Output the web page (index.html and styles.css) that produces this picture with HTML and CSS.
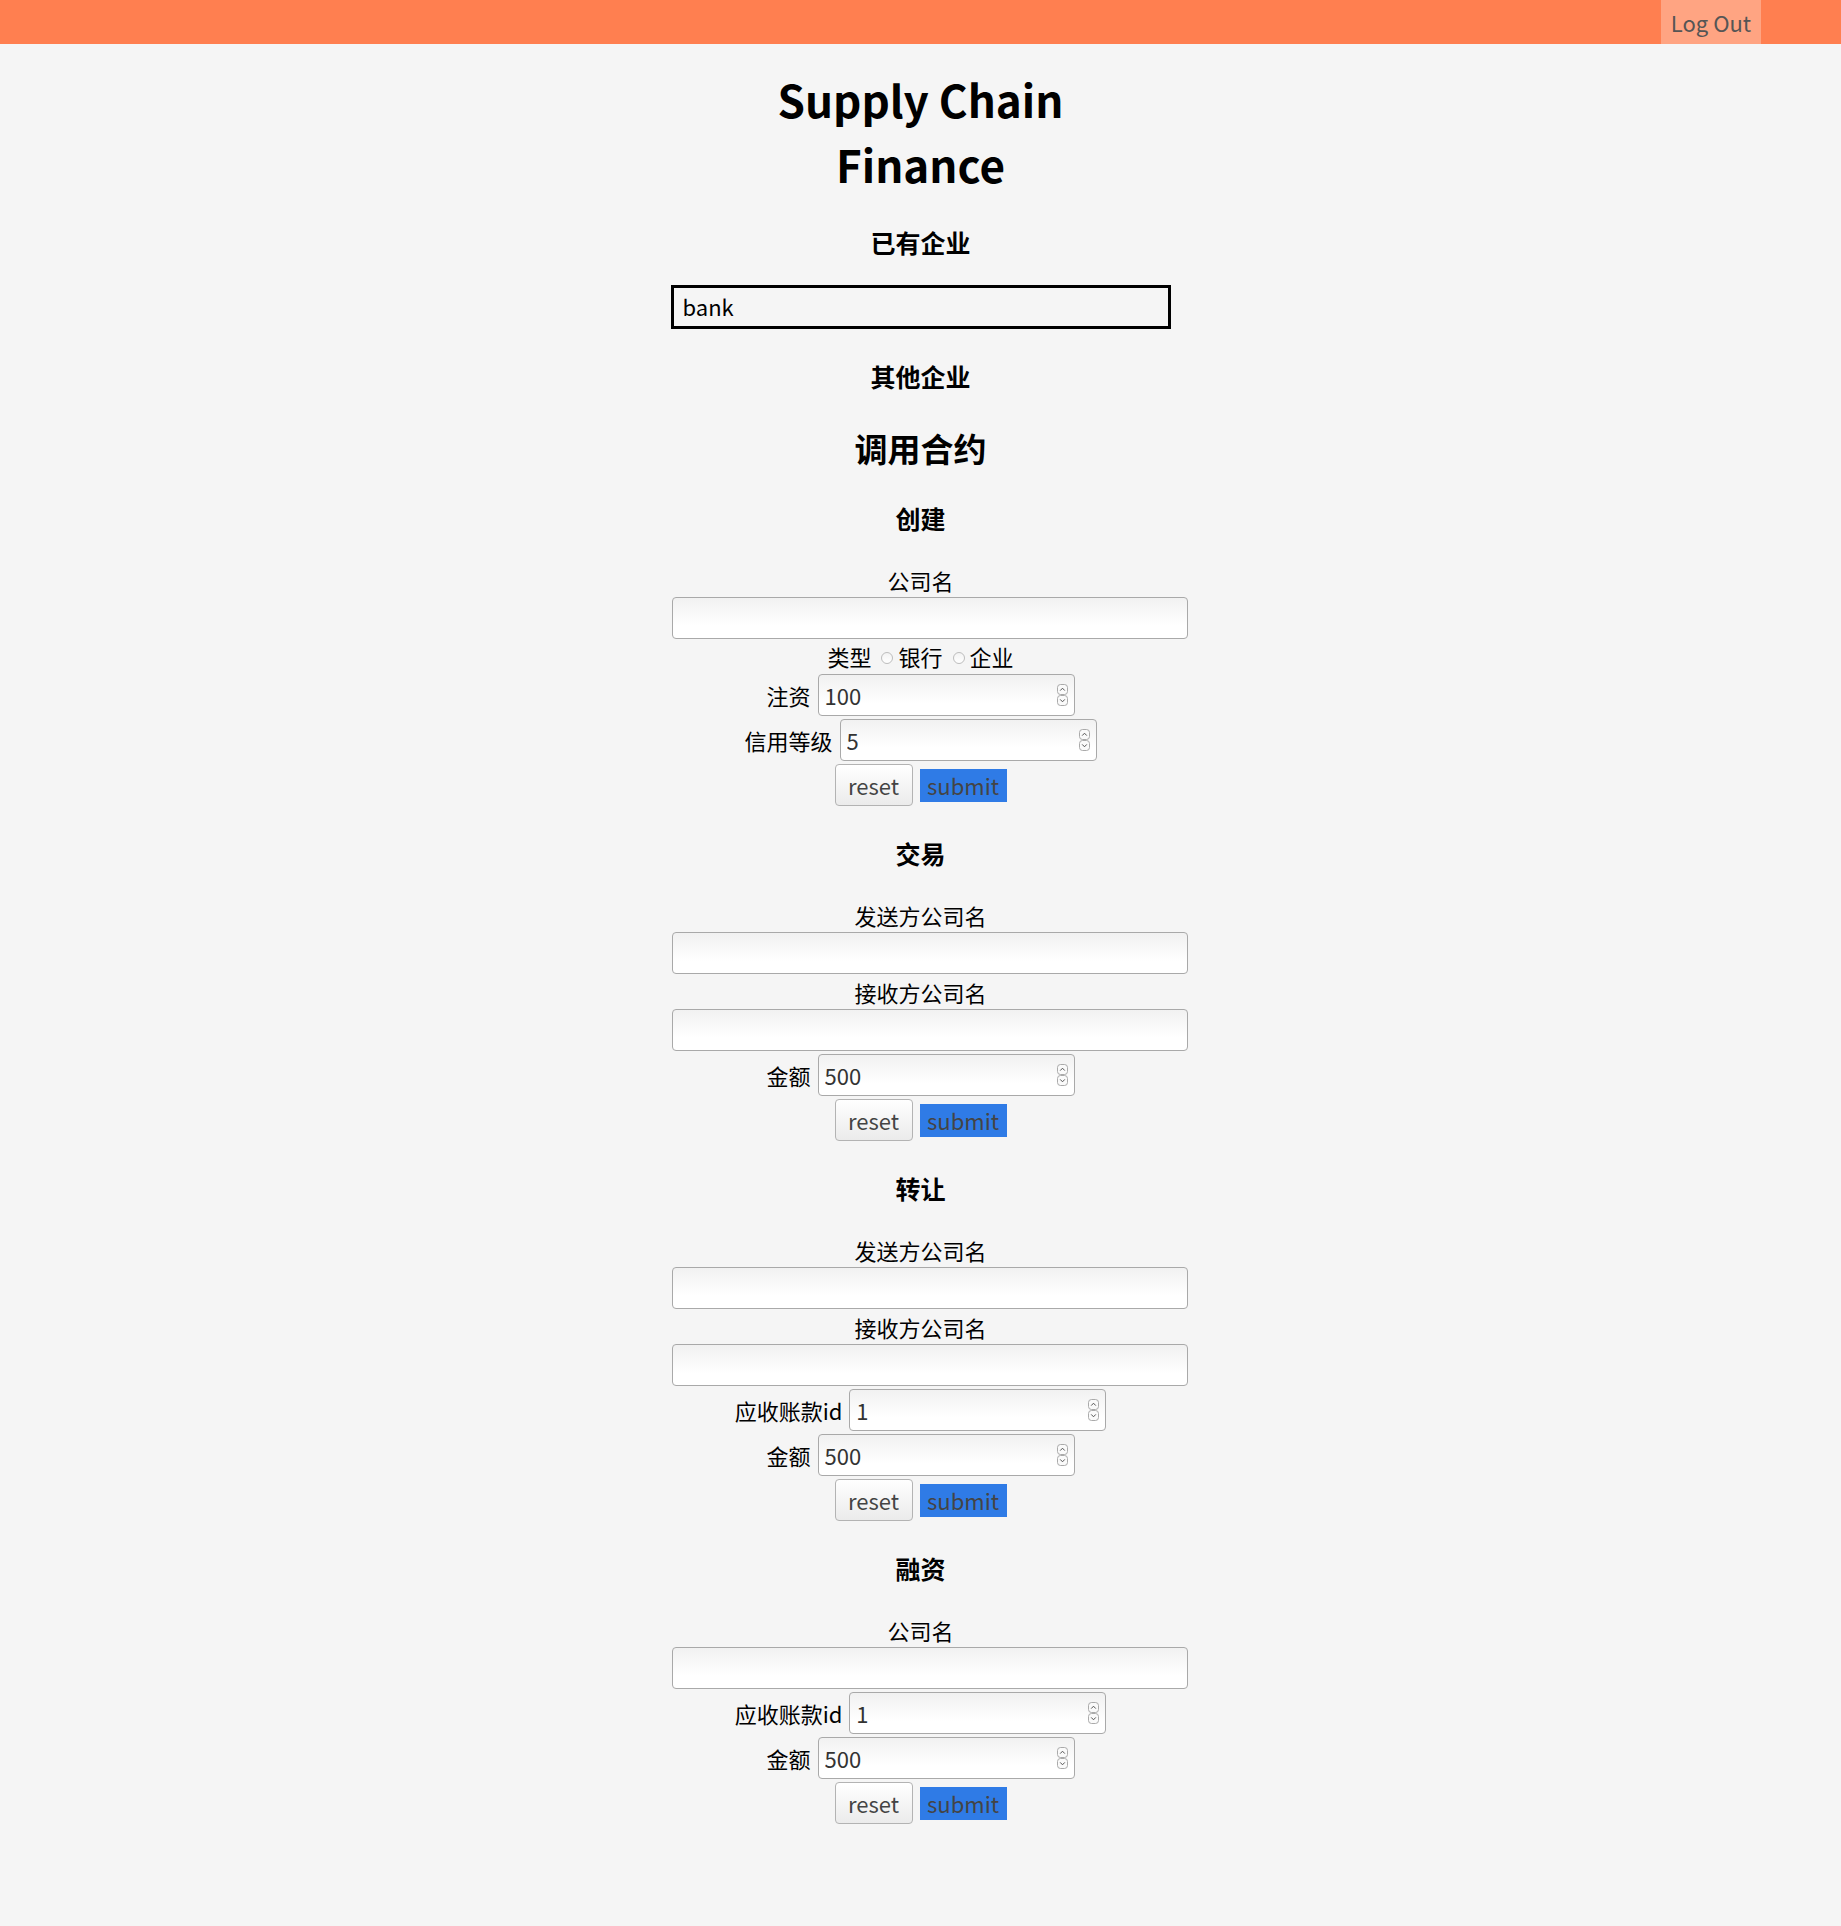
FILE: index.html
```html
<!DOCTYPE html>
<html lang="zh-CN">
<head>
<meta charset="utf-8">
<title>Supply Chain Finance</title>
<link rel="stylesheet" href="styles.css">
</head>
<body>
<header class="topbar">
  <button class="logout" type="button">Log Out</button>
</header>
<main class="page">
  <h1 class="title">Supply Chain Finance</h1>
  <h3 class="sub sub-existing">已有企业</h3>
  <div class="company-box">bank</div>
  <h3 class="sub sub-other">其他企业</h3>
  <h2 class="section-title">调用合约</h2>

  <div class="ops">
    <section class="op">
      <h3 class="sub">创建</h3>
      <form class="op-form">
        <div class="field-stack">
          <label class="stack-label">公司名</label>
          <input class="text-input" type="text">
        </div>
        <div class="radio-row">
          <span class="radio-title">类型</span>
          <label class="radio-opt"><input class="radio" type="radio" name="kind">银行</label>
          <label class="radio-opt"><input class="radio" type="radio" name="kind">企业</label>
        </div>
        <div class="num-row">
          <label class="row-label">注资</label>
          <div class="num">
            <input class="num-input" type="text" value="100">
            <svg class="spin" width="11" height="22" viewBox="0 0 11 22"><rect x="0.5" y="0.5" width="10" height="10" rx="3"/><rect x="0.5" y="11.5" width="10" height="10" rx="3"/><path class="chev" d="M3.2 6.6 L5.5 4.2 L7.8 6.6"/><path class="chev" d="M3.2 15.4 L5.5 17.8 L7.8 15.4"/></svg>
          </div>
        </div>
        <div class="num-row">
          <label class="row-label">信用等级</label>
          <div class="num">
            <input class="num-input" type="text" value="5">
            <svg class="spin" width="11" height="22" viewBox="0 0 11 22"><rect x="0.5" y="0.5" width="10" height="10" rx="3"/><rect x="0.5" y="11.5" width="10" height="10" rx="3"/><path class="chev" d="M3.2 6.6 L5.5 4.2 L7.8 6.6"/><path class="chev" d="M3.2 15.4 L5.5 17.8 L7.8 15.4"/></svg>
          </div>
        </div>
        <div class="btn-row">
          <button class="btn-reset" type="reset">reset</button>
          <button class="btn-submit" type="button">submit</button>
        </div>
      </form>
    </section>

    <section class="op">
      <h3 class="sub">交易</h3>
      <form class="op-form">
        <div class="field-stack">
          <label class="stack-label">发送方公司名</label>
          <input class="text-input" type="text">
        </div>
        <div class="field-stack">
          <label class="stack-label">接收方公司名</label>
          <input class="text-input" type="text">
        </div>
        <div class="num-row">
          <label class="row-label">金额</label>
          <div class="num">
            <input class="num-input" type="text" value="500">
            <svg class="spin" width="11" height="22" viewBox="0 0 11 22"><rect x="0.5" y="0.5" width="10" height="10" rx="3"/><rect x="0.5" y="11.5" width="10" height="10" rx="3"/><path class="chev" d="M3.2 6.6 L5.5 4.2 L7.8 6.6"/><path class="chev" d="M3.2 15.4 L5.5 17.8 L7.8 15.4"/></svg>
          </div>
        </div>
        <div class="btn-row">
          <button class="btn-reset" type="reset">reset</button>
          <button class="btn-submit" type="button">submit</button>
        </div>
      </form>
    </section>

    <section class="op">
      <h3 class="sub">转让</h3>
      <form class="op-form">
        <div class="field-stack">
          <label class="stack-label">发送方公司名</label>
          <input class="text-input" type="text">
        </div>
        <div class="field-stack">
          <label class="stack-label">接收方公司名</label>
          <input class="text-input" type="text">
        </div>
        <div class="num-row">
          <label class="row-label">应收账款id</label>
          <div class="num">
            <input class="num-input" type="text" value="1">
            <svg class="spin" width="11" height="22" viewBox="0 0 11 22"><rect x="0.5" y="0.5" width="10" height="10" rx="3"/><rect x="0.5" y="11.5" width="10" height="10" rx="3"/><path class="chev" d="M3.2 6.6 L5.5 4.2 L7.8 6.6"/><path class="chev" d="M3.2 15.4 L5.5 17.8 L7.8 15.4"/></svg>
          </div>
        </div>
        <div class="num-row">
          <label class="row-label">金额</label>
          <div class="num">
            <input class="num-input" type="text" value="500">
            <svg class="spin" width="11" height="22" viewBox="0 0 11 22"><rect x="0.5" y="0.5" width="10" height="10" rx="3"/><rect x="0.5" y="11.5" width="10" height="10" rx="3"/><path class="chev" d="M3.2 6.6 L5.5 4.2 L7.8 6.6"/><path class="chev" d="M3.2 15.4 L5.5 17.8 L7.8 15.4"/></svg>
          </div>
        </div>
        <div class="btn-row">
          <button class="btn-reset" type="reset">reset</button>
          <button class="btn-submit" type="button">submit</button>
        </div>
      </form>
    </section>

    <section class="op">
      <h3 class="sub">融资</h3>
      <form class="op-form">
        <div class="field-stack">
          <label class="stack-label">公司名</label>
          <input class="text-input" type="text">
        </div>
        <div class="num-row">
          <label class="row-label">应收账款id</label>
          <div class="num">
            <input class="num-input" type="text" value="1">
            <svg class="spin" width="11" height="22" viewBox="0 0 11 22"><rect x="0.5" y="0.5" width="10" height="10" rx="3"/><rect x="0.5" y="11.5" width="10" height="10" rx="3"/><path class="chev" d="M3.2 6.6 L5.5 4.2 L7.8 6.6"/><path class="chev" d="M3.2 15.4 L5.5 17.8 L7.8 15.4"/></svg>
          </div>
        </div>
        <div class="num-row">
          <label class="row-label">金额</label>
          <div class="num">
            <input class="num-input" type="text" value="500">
            <svg class="spin" width="11" height="22" viewBox="0 0 11 22"><rect x="0.5" y="0.5" width="10" height="10" rx="3"/><rect x="0.5" y="11.5" width="10" height="10" rx="3"/><path class="chev" d="M3.2 6.6 L5.5 4.2 L7.8 6.6"/><path class="chev" d="M3.2 15.4 L5.5 17.8 L7.8 15.4"/></svg>
          </div>
        </div>
        <div class="btn-row">
          <button class="btn-reset" type="reset">reset</button>
          <button class="btn-submit" type="button">submit</button>
        </div>
      </form>
    </section>
  </div>
</main>
</body>
</html>
```

FILE: styles.css
```css
* { box-sizing: border-box; }

html, body {
  margin: 0;
  padding: 0;
  background: #f5f5f5;
}

body {
  font-family: "Noto Sans CJK SC", "Noto Sans", sans-serif;
  font-size: 22px;
  color: #000;
  min-height: 1926px;
}

.topbar {
  height: 44px;
  background: #ff7f50;
  display: flex;
  justify-content: flex-end;
  padding-right: 80px;
}

.logout {
  width: 100px;
  height: 44px;
  border: none;
  margin: 0;
  padding: 0;
  background: #ffa482;
  color: #555;
  font-family: inherit;
  font-size: 22px;
  line-height: 44px;
}

.page {
  width: 500px;
  margin: 0 auto;
  text-align: center;
  display: flex;
  flex-direction: column;
  align-items: stretch;
}

.title {
  max-width: 360px;
  margin: 23px auto 0;
  font-size: 44px;
  line-height: 65px;
  font-weight: 700;
}

.sub {
  margin: 0;
  font-size: 25px;
  line-height: 32px;
  font-weight: 700;
}

.sub-existing { margin-top: 29px; }
.sub-other { margin-top: 31px; }

.company-box {
  margin-top: 27px;
  height: 44px;
  border: 3px solid #000;
  text-align: left;
  padding-left: 9px;
  font-size: 22px;
  line-height: 37px;
}

.section-title {
  margin: 36px 0 0;
  font-size: 33px;
  line-height: 40px;
  font-weight: 700;
}

.ops {
  display: flex;
  flex-direction: column;
  gap: 31px;
  padding-top: 34px;
}

.op-form {
  margin: 31px 0 0;
  display: flex;
  flex-direction: column;
  align-items: center;
  gap: 3px;
}

.field-stack {
  align-self: stretch;
  display: flex;
  flex-direction: column;
  align-items: flex-start;
}

.stack-label {
  align-self: stretch;
  text-align: center;
  line-height: 30px;
  margin-bottom: 2px;
}

.text-input,
.num-input {
  display: block;
  height: 42px;
  border: 1px solid #a9a9a9;
  border-radius: 4px;
  background: linear-gradient(#f1f1f1, #ffffff 70%);
  font-family: inherit;
  font-size: 22px;
  color: #333;
  padding: 0 6px;
  margin: 0;
  outline: none;
}

.text-input {
  width: 516px;
  margin-left: 1px;
}

.radio-row {
  height: 29px;
  display: flex;
  align-items: center;
  justify-content: center;
  line-height: 29px;
}

.radio-title { margin-right: 5px; }

.radio-opt {
  display: flex;
  align-items: center;
  margin-right: 5px;
}

.radio-opt:last-child { margin-right: 0; }

.radio {
  appearance: none;
  -webkit-appearance: none;
  width: 12px;
  height: 12px;
  margin: 2px 5px 0 5px;
  border: 1px solid #bdbdbd;
  border-radius: 50%;
  background: linear-gradient(#f3f3f3, #ffffff);
}

.num-row {
  display: flex;
  align-items: center;
  justify-content: center;
  gap: 7px;
  height: 42px;
}

.row-label {
  line-height: 42px;
}

.num {
  position: relative;
  width: 257px;
  height: 42px;
}

.num-input {
  width: 100%;
}

.spin {
  position: absolute;
  right: 7px;
  top: 10px;
  fill: #fafafa;
  stroke: #a0a0a0;
  stroke-width: 0.9;
}

.spin .chev {
  fill: none;
  stroke: #555;
  stroke-width: 1;
}

.btn-row {
  display: flex;
  align-items: center;
  justify-content: center;
  gap: 7px;
  height: 42px;
}

.btn-reset {
  width: 78px;
  height: 42px;
  border: 1px solid #b3b3b3;
  border-radius: 4px;
  background: linear-gradient(#ffffff, #ebebeb);
  color: #444;
  font-family: inherit;
  font-size: 22px;
  padding: 0;
  margin: 0;
}

.btn-submit {
  width: 87px;
  height: 33px;
  border: none;
  border-radius: 0;
  background: #2f7be6;
  color: #444;
  font-family: inherit;
  font-size: 22px;
  padding: 0;
  margin: 0;
  line-height: 33px;
}
```
